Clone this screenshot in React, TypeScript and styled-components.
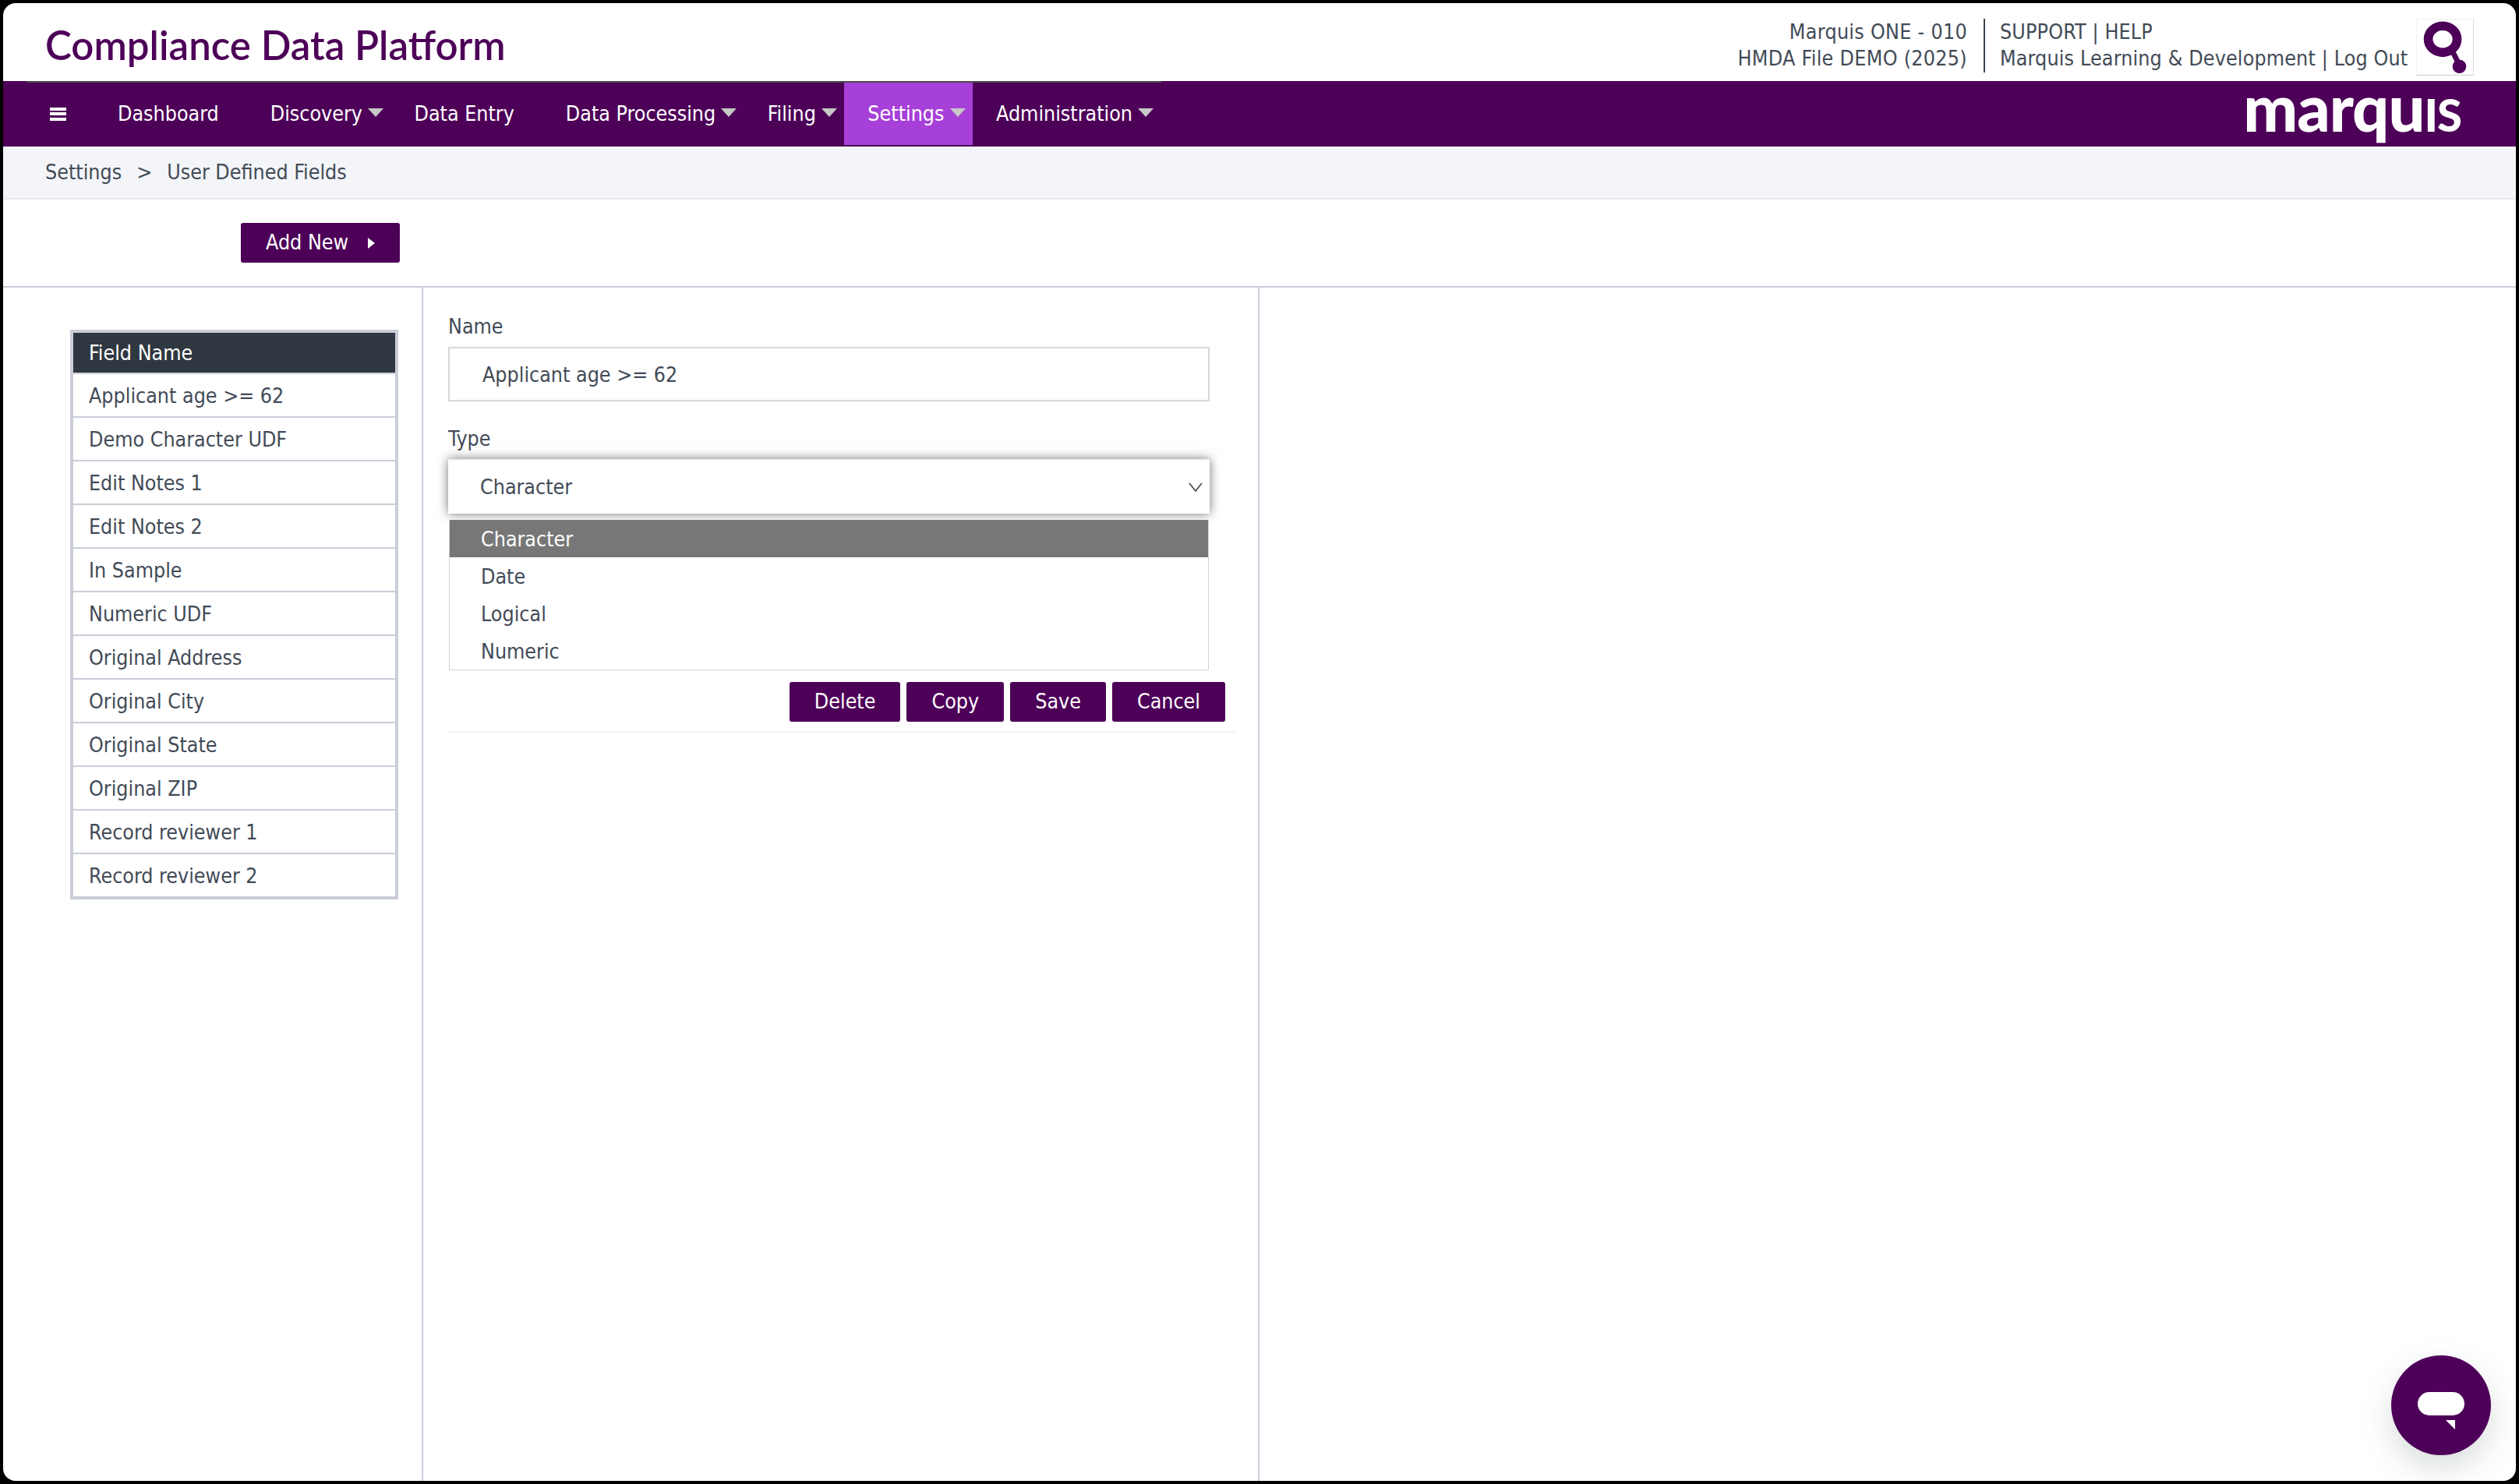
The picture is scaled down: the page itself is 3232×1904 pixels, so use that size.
import React from 'react';
import styled, { createGlobalStyle } from 'styled-components';

const Global = createGlobalStyle`
  html, body { margin: 0; padding: 0; height: 100%; background: #000; }
  #root { height: 100%; }
  * { box-sizing: border-box; }
`;
const purple = '#4d0058';
const ink = '#424b57';
const ui = '"DejaVu Sans Condensed", "DejaVu Sans", sans-serif';

const Frame = styled.div`
  position: relative; width: 3224px; height: 1896px; margin: 4px; background: #fff;
  border-radius: 16px; overflow: hidden; display: flex; flex-direction: column;
  font: 26.6px/1.2 ${ui}; color: ${ink};
`;
const Header = styled.header`
  height: 100px; display: flex; align-items: flex-start; padding: 20px 54px 0 54px;
`;
const Title = styled.h1`
  margin: 3px 0 0; font: 600 51px/62px Lato, sans-serif; color: ${purple}; flex: 1;
`;
const Account = styled.div`
  text-align: right; line-height: 34px; padding-right: 21px; letter-spacing: .3px;
  border-right: 2px solid #3a4450; height: 69px; white-space: nowrap;
`;
const Links = styled.div`
  line-height: 34px; padding-left: 19px; white-space: nowrap; width: 553px; letter-spacing: .15px;
`;
const SearchBox = styled.div`
  width: 74px; height: 73px; border: 1px solid #f0f0f0; border-bottom-color: #ccc; border-right-color: #ddd;
  display: flex; align-items: center; justify-content: center;
`;
const Nav = styled.nav`
  height: 84px; flex: none; background: ${purple}; display: flex; padding-left: 30px; position: relative;
`;
const Menu = styled.ul`
  list-style: none; margin: 0; padding: 0; display: flex; height: 82px;
  border-top: 2px solid #4a4a4a; align-self: flex-start;
`;
const MenuItem = styled.li<{ $active?: boolean; $caret?: boolean }>`
  height: 80px; display: flex; align-items: center; color: #fff; white-space: nowrap;
  padding: 0 ${p => (p.$caret ? 9.5 : 36)}px 0 30px;
  background: ${p => (p.$active ? '#a640d8' : 'transparent')};
`;
const BurgerItem = styled(MenuItem)`
  padding-right: 38px;
`;
const Caret = styled.span`
  width: 0; height: 0; margin: 0 0 3px 7px;
  border-left: 10px solid transparent; border-right: 10px solid transparent; border-top: 11px solid #c8c8c8;
`;
const Burger = styled.span`
  display: block; width: 21px; height: 17px; margin-right: -2px;
  border-top: 4px solid #fff; border-bottom: 4px solid #fff; position: relative;
  &::after { content: ''; position: absolute; left: 0; right: 0; top: 2.5px; height: 4px; background: #fff; }
`;
const Logo = styled.div`
  margin-left: auto; margin-right: 70px; font: 900 83px/84px Lato, sans-serif; color: #fff; letter-spacing: -1px;
  margin-top: -9px;
  span { font-variant: small-caps; }
`;
const Crumbs = styled.div`
  height: 68px; flex: none; background: #f4f5f9; border-bottom: 2px solid #e8e9ec;
  display: flex; align-items: center; padding-left: 54px; gap: 19px;
`;
const Toolbar = styled.div`
  height: 113px; flex: none; border-bottom: 2px solid #c9ced8; padding: 30px 0 0 305px;
`;
const PurpleButton = styled.button`
  height: 51px; border: 0; border-radius: 3px; background: ${purple}; color: #fff;
  font: 26.6px/1 ${ui}; padding: 0 32px; display: inline-flex; align-items: center; white-space: nowrap;
`;
const RightCaret = styled.span`
  width: 0; height: 0; margin-left: 25px;
  border-top: 7px solid transparent; border-bottom: 7px solid transparent; border-left: 9px solid #fff;
`;
const Columns = styled.div`
  flex: 1; display: flex; min-height: 0;
`;
const ListColumn = styled.aside`
  width: 539px; flex: none; border-right: 2px solid #c9ced8; padding: 54px 0 0 86px;
`;
const FieldTable = styled.div`
  width: 421px; border: 4px solid #c9ced8;
`;
const FieldHead = styled.div`
  box-sizing: content-box; height: 51px; background: #2f3740; color: #fff; display: flex; align-items: center;
  padding-left: 20px; border-bottom: 2px solid #c9ced8;
`;
const FieldRow = styled.div`
  height: 56px; display: flex; align-items: center; padding: 1px 0 0 20px; border-bottom: 2px solid #c9ced8;
  &:last-child { border-bottom: 0; height: 54px; }
`;
const FormColumn = styled.section`
  width: 1073px; flex: none; border-right: 2px solid #c9ced8; padding: 34px 0 0 30px;
`;
const Form = styled.div`
  width: 1011px; border-bottom: 2px solid #f4f4f6; height: 537px;
`;
const Label = styled.label<{ $top?: number }>`
  display: block; margin: ${p => p.$top ?? 0}px 0 11px 2px; line-height: 31px;
`;
const NameInput = styled.div`
  width: 977px; height: 70px; margin-left: 2px; border: 2px solid #d8d8dc; display: flex; align-items: center;
  padding: 2px 0 0 42px;
`;
const SelectBox = styled.div`
  width: 977px; height: 70px; margin-left: 2px; background: #fff; border-top: 2px solid #f2f2f2;
  box-shadow: 0 0 13px rgba(0,0,0,.55); display: flex; align-items: center; justify-content: space-between;
  padding: 0 9px 0 41px;
`;
const OptionList = styled.ul`
  list-style: none; margin: 8px 0 0 3px; padding: 0; width: 975px; border: 1px solid #d4d4d8; border-top: 0; height: 193px;
`;
const Option = styled.li<{ $selected?: boolean }>`
  height: 48px; display: flex; align-items: center; padding: 2px 0 0 40px;
  background: ${p => (p.$selected ? '#777' : '#fff')}; color: ${p => (p.$selected ? '#fff' : ink)};
`;
const Actions = styled.div`
  display: flex; justify-content: flex-end; gap: 8px; margin-top: 15px; padding-right: 12px;
`;
const ChatButton = styled.div`
  position: absolute; left: 3064px; top: 1735px; width: 128px; height: 128px; border-radius: 50%;
  background: ${purple}; box-shadow: 0 16px 40px rgba(80,100,100,.22);
  display: flex; align-items: center; justify-content: center;
`;

const menu: [string, boolean][] = [
  ['Dashboard', false], ['Discovery', true], ['Data Entry', false], ['Data Processing', true],
  ['Filing', true], ['Settings', true], ['Administration', true],
];
const fields = ['Applicant age >= 62', 'Demo Character UDF', 'Edit Notes 1', 'Edit Notes 2', 'In Sample', 'Numeric UDF',
  'Original Address', 'Original City', 'Original State', 'Original ZIP', 'Record reviewer 1', 'Record reviewer 2'];

export default function App() {
  return (
    <Frame>
      <Global />
      <Header>
        <Title>Compliance Data Platform</Title>
        <Account>Marquis ONE - 010<br />HMDA File DEMO (2025)</Account>
        <Links>SUPPORT | HELP<br />Marquis Learning &amp; Development | Log Out</Links>
        <SearchBox>
          <svg width="74" height="73" viewBox="0 0 74 73">
            <ellipse cx="34" cy="26" rx="19" ry="17.5" fill="none" stroke={purple} strokeWidth="12" />
            <path d="M46 40 L55 58" stroke={purple} strokeWidth="7" />
            <circle cx="56" cy="62" r="9" fill={purple} />
          </svg>
        </SearchBox>
      </Header>
      <Nav>
        <Menu>
          <BurgerItem><Burger /></BurgerItem>
          {menu.map(([t, c]) => (
            <MenuItem key={t} $caret={c} $active={t === 'Settings'}>{t}{c && <Caret />}</MenuItem>
          ))}
        </Menu>
        <Logo>marqu<span>is</span></Logo>
      </Nav>
      <Crumbs><span>Settings</span><span>&gt;</span><span>User Defined Fields</span></Crumbs>
      <Toolbar><PurpleButton>Add New<RightCaret /></PurpleButton></Toolbar>
      <Columns>
        <ListColumn>
          <FieldTable>
            <FieldHead>Field Name</FieldHead>
            {fields.map(f => <FieldRow key={f}>{f}</FieldRow>)}
          </FieldTable>
        </ListColumn>
        <FormColumn>
          <Form>
            <Label>Name</Label>
            <NameInput>Applicant age &gt;= 62</NameInput>
            <Label $top={32}>Type</Label>
            <SelectBox>
              Character
              <svg width="18" height="12" viewBox="0 0 18 12"><path d="M1 1 L9 11 L17 1" fill="none" stroke="#444" strokeWidth="1.6" /></svg>
            </SelectBox>
            <OptionList>
              {['Character', 'Date', 'Logical', 'Numeric'].map((o, i) => <Option key={o} $selected={i === 0}>{o}</Option>)}
            </OptionList>
            <Actions>
              {['Delete', 'Copy', 'Save', 'Cancel'].map(b => <PurpleButton key={b}>{b}</PurpleButton>)}
            </Actions>
          </Form>
        </FormColumn>
      </Columns>
      <ChatButton>
        <svg width="128" height="128" viewBox="0 0 128 128">
          <rect x="34" y="47" width="60" height="30" rx="15" fill="#fff" />
          <path d="M70 83 H82 V95 Z" fill="#fff" />
        </svg>
      </ChatButton>
    </Frame>
  );
}
